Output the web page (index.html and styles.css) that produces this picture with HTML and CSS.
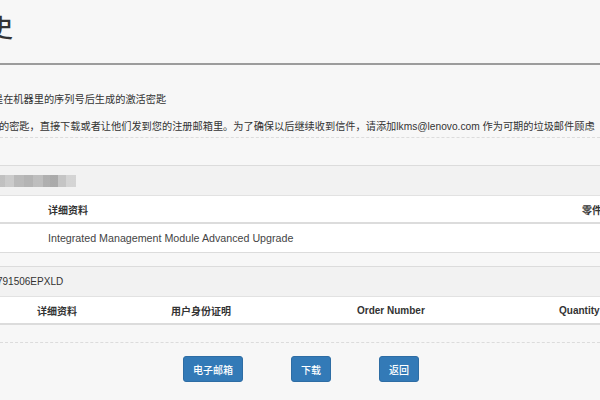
FILE: index.html
```html
<!DOCTYPE html>
<html lang="zh">
<head>
<meta charset="utf-8">
<title>激活密匙历史</title>
<link rel="stylesheet" href="styles.css">
</head>
<body>
<div class="page">
  <header class="page-header">
    <h1 class="title">历史</h1>
  </header>

  <p class="intro intro-1">是在机器里的序列号后生成的激活密匙</p>
  <p class="intro intro-2">的密匙，直接下载或者让他们发到您的注册邮箱里。为了确保以后继续收到信件，请添加lkms@lenovo.com 作为可期的垃圾邮件顾虑</p>

  <hr class="dashed">

  <section class="panel panel-first">
    <div class="panel-heading"><span class="mosaic"></span></div>
    <div class="grid grid-one head-row">
      <div class="cell"></div>
      <div class="cell">详细资料</div>
      <div class="cell">零件</div>
    </div>
    <div class="grid grid-one body-row">
      <div class="cell"></div>
      <div class="cell product">Integrated Management Module Advanced Upgrade</div>
      <div class="cell"></div>
    </div>
  </section>

  <section class="panel panel-second">
    <div class="panel-heading"><span class="serial">791506EPXLD</span></div>
    <div class="grid grid-two head-row">
      <div class="cell"></div>
      <div class="cell">详细资料</div>
      <div class="cell">用户身份证明</div>
      <div class="cell">Order Number</div>
      <div class="cell">Quantity</div>
    </div>
  </section>

  <hr class="dashed dashed-bottom">

  <div class="actions">
    <button class="btn">电子邮箱</button>
    <button class="btn">下载</button>
    <button class="btn">返回</button>
  </div>
</div>
</body>
</html>
```

FILE: styles.css
```css
html, body {
  margin: 0;
  padding: 0;
}

body {
  width: 600px;
  height: 400px;
  overflow: hidden;
  background: #f7f7f7;
  color: #333;
  font-family: "Liberation Sans", "Noto Sans CJK SC", sans-serif;
}

.page {
  width: 600px;
}

.page-header {
  padding-top: 13px;
  padding-bottom: 20px;
  border-bottom: 2px solid #9c9c9c;
}

.title {
  margin: 0 0 0 -37px;
  font-size: 25px;
  line-height: 30px;
  font-weight: 500;
  color: #333;
  white-space: nowrap;
}

.intro {
  font-size: 10.2px;
  line-height: 16px;
  white-space: nowrap;
  margin: 0;
}

.intro-1 {
  margin-top: 27px;
  margin-left: -7px;
}

.intro-2 {
  margin-top: 11px;
  margin-left: -1px;
}

.dashed {
  margin: 2px 0 0;
  height: 0;
  border: 0;
  border-top: 1px dashed #dcdcdc;
}

.panel {
  border-top: 1px solid #dcdcdc;
  width: 640px;
}

.panel-first {
  margin-top: 27px;
}

.panel-second {
  margin-top: 13px;
}

.panel-heading {
  height: 29px;
  background: #f2f2f2;
  border-bottom: 1px solid #e2e2e2;
  display: flex;
  align-items: center;
  font-size: 10px;
}

.mosaic {
  display: block;
  width: 76px;
  height: 12px;
  margin-top: 1px;
  background:
    linear-gradient(to right,
      #b8b8b8 0 5px, #c4c4c4 5px 14px, #b0b0b0 14px 24px, #a9a9a9 24px 33px,
      #b5b5b5 33px 43px, #a4a4a4 43px 50px, #9e9e9e 50px 58px, #bdbdbd 58px 66px,
      #cfcfcf 66px 76px);
  opacity: 0.85;
}

.serial {
  margin-left: -3px;
  color: #333;
}

.grid {
  display: grid;
  background: #fff;
  font-size: 10px;
  align-items: center;
}

.grid-one {
  grid-template-columns: 40px 534px 66px;
}

.grid-two {
  grid-template-columns: 29px 134px 186px 202px 89px;
}

.cell {
  padding: 0 8px;
  white-space: nowrap;
}

.head-row {
  height: 26px;
  font-weight: 700;
  border-bottom: 2px solid #dcdcdc;
}

.body-row {
  height: 28px;
  border-bottom: 1px solid #dcdcdc;
}

.product {
  font-size: 10.7px;
  color: #444;
}

.dashed-bottom {
  margin-top: 17px;
}

.actions {
  display: flex;
  justify-content: center;
  gap: 48px;
  margin-top: 13px;
  padding-left: 2px;
}

.btn {
  height: 26px;
  padding: 0 9px;
  border: 1px solid #2e6da4;
  border-radius: 3px;
  background: #337ab7;
  color: #fff;
  font-family: "Liberation Sans", "Noto Sans CJK SC", sans-serif;
  font-size: 10px;
  font-weight: 500;
  cursor: pointer;
}
```
